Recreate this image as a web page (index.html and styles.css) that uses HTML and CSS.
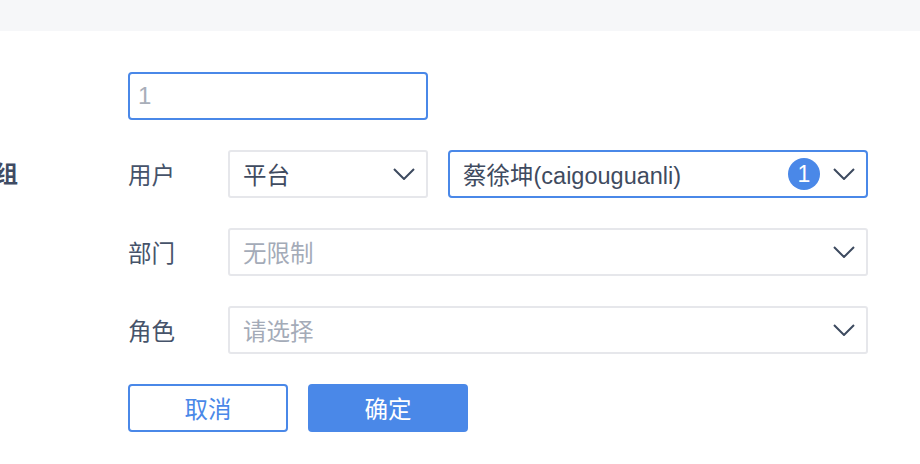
FILE: index.html
```html
<!DOCTYPE html>
<html lang="zh-CN">
<head>
    <meta charset="UTF-8">
    <meta name="viewport" content="width=device-width, initial-scale=1.0">
    <title>用户组</title>
    <link rel="stylesheet" href="styles.css">
</head>
<body>
    <div class="topBar"></div>
    <div class="main">
        <div class="side">
            <span class="sideTitle">用户组</span>
        </div>
        <form class="form">
            <div class="row">
                <div class="nameInput">1</div>
            </div>
            <div class="row">
                <span class="label">用户</span>
                <div class="select small">
                    <span class="value">平台</span>
                    <svg class="arrow" viewBox="0 0 22 12"><path d="M1 1 L11 11 L21 1" /></svg>
                </div>
                <div class="select wide active">
                    <span class="value">蔡徐坤(caigouguanli)</span>
                    <span class="badge">1</span>
                    <svg class="arrow" viewBox="0 0 22 12"><path d="M1 1 L11 11 L21 1" /></svg>
                </div>
            </div>
            <div class="row">
                <span class="label">部门</span>
                <div class="select full">
                    <span class="value placeholder">无限制</span>
                    <svg class="arrow" viewBox="0 0 22 12"><path d="M1 1 L11 11 L21 1" /></svg>
                </div>
            </div>
            <div class="row">
                <span class="label">角色</span>
                <div class="select full">
                    <span class="value placeholder">请选择</span>
                    <svg class="arrow" viewBox="0 0 22 12"><path d="M1 1 L11 11 L21 1" /></svg>
                </div>
            </div>
            <div class="row btns">
                <button type="button" class="btn cancel">取消</button>
                <button type="button" class="btn ok">确定</button>
            </div>
        </form>
    </div>
</body>
</html>
```

FILE: styles.css
```css
*{
    box-sizing: border-box;
}
body{
    margin: 0;
    background: #fff;
    font-family: "Liberation Sans", "Noto Sans CJK SC", sans-serif;
    color: #46536a;
    overflow: hidden;
}
.topBar{
    height: 31px;
    background-color: #f6f7f9;
}
.main{
    display: flex;
    padding-top: 41px;
}
.side{
    width: 18px;
    margin-right: 110px;
    display: flex;
    justify-content: flex-end;
    overflow: hidden;
    padding-top: 88px;
}
.sideTitle{
    white-space: nowrap;
    font-size: 23px;
    font-weight: 700;
    line-height: 28px;
    color: #3f4b63;
}
.form{
    display: flex;
    flex-direction: column;
    gap: 30px;
}
.row{
    display: flex;
    align-items: center;
    height: 48px;
}
.nameInput{
    width: 300px;
    height: 48px;
    border: 2px solid #4a88e8;
    border-radius: 4px;
    padding: 0 8px;
    font-size: 24px;
    line-height: 44px;
    color: #a8aeb9;
}
.label{
    width: 100px;
    font-size: 23.5px;
    color: #46536a;
}
.select{
    display: flex;
    align-items: center;
    height: 48px;
    border: 2px solid #e6e7eb;
    border-radius: 3px;
    padding: 0 11px 0 13px;
    font-size: 23.5px;
}
.select.small{
    width: 200px;
}
.select.wide{
    width: 420px;
    margin-left: 20px;
}
.select.full{
    width: 640px;
}
.select.active{
    border-color: #4a88e8;
    border-radius: 4px;
}
.value{
    flex: 1;
    color: #3f4b60;
    white-space: nowrap;
}
.placeholder{
    color: #a4abb8;
}
.badge{
    width: 32px;
    height: 32px;
    border-radius: 50%;
    background-color: #4a88e8;
    color: #fff;
    font-size: 23px;
    line-height: 32px;
    text-align: center;
    margin-right: 13px;
}
.arrow{
    width: 22px;
    height: 12px;
    fill: none;
    stroke: #3d4a5f;
    stroke-width: 2;
}
.btn{
    width: 160px;
    height: 48px;
    border-radius: 4px;
    font-family: "Liberation Sans", "Noto Sans CJK SC", sans-serif;
    font-size: 23.5px;
    cursor: pointer;
}
.cancel{
    background: #fff;
    border: 2px solid #4a88e8;
    color: #4a88e8;
    margin-right: 20px;
}
.ok{
    background: #4a88e8;
    border: none;
    color: #fff;
}
```
